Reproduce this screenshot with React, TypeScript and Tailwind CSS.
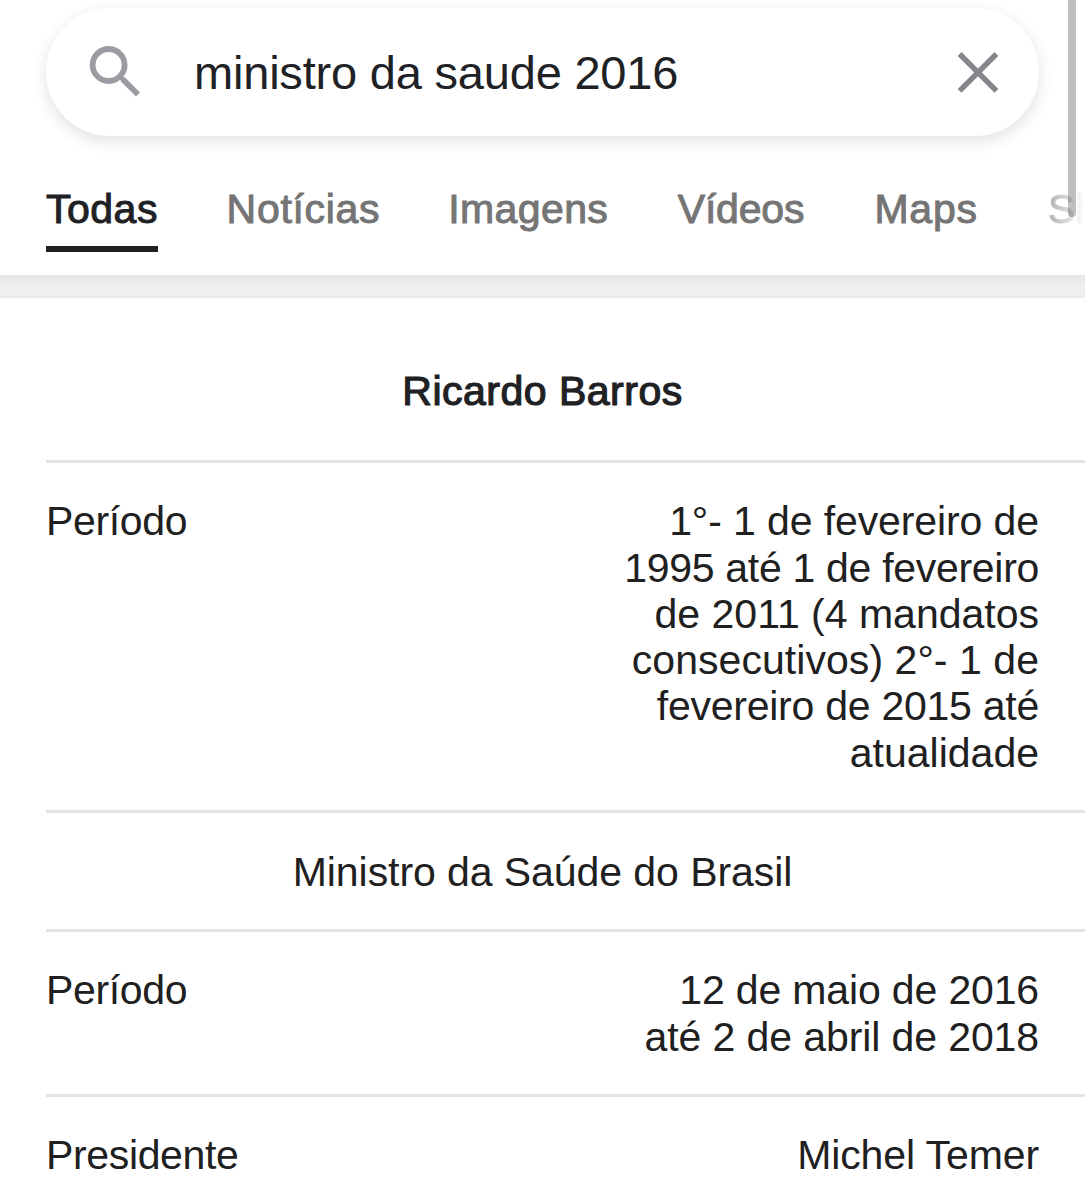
type Tab = { label: string; className: string };

const tabs: Tab[] = [
  { label: "Todas", className: "w-[112px] text-[#202124] tracking-[0.5px]" },
  { label: "Notícias", className: "w-[153px] text-[#757575] tracking-[0.7px]" },
  { label: "Imagens", className: "w-[161px] text-[#757575] tracking-[0.4px]" },
  { label: "Vídeos", className: "w-[128px] text-[#757575] tracking-[-0.2px]" },
  { label: "Maps", className: "w-[105px] text-[#757575] tracking-[0.8px]" },
];

type Line = { text: string; className?: string };

const period: Line[] = [
  { text: "1°- 1 de fevereiro de", className: "tracking-[-0.1px]" },
  { text: "1995 até 1 de fevereiro", className: "tracking-[-0.3px]" },
  { text: "de 2011 (4 mandatos" },
  { text: "consecutivos) 2°- 1 de", className: "tracking-[0.05px]" },
  { text: "fevereiro de 2015 até", className: "tracking-[-0.25px]" },
  { text: "atualidade" },
];

const term: Line[] = [
  { text: "12 de maio de 2016", className: "tracking-[-0.15px]" },
  { text: "até 2 de abril de 2018", className: "tracking-[-0.1px]" },
];

function SearchIcon() {
  return (
    <svg width="52" height="52" viewBox="0 0 52 52" fill="none" stroke="#9a9ca2">
      <circle cx="19.6" cy="19" r="16" strokeWidth="5.8" />
      <path d="M33.5 33L49 48.5" strokeWidth="5.8" />
      <path d="M31 30.5L35 34.5" strokeWidth="4.5" />
    </svg>
  );
}

function ClearIcon() {
  return (
    <svg width="42" height="42" viewBox="0 0 42 42" fill="none" stroke="#85868b" strokeWidth="5.4">
      <path d="M2.6 3L39.4 39.8M39.4 3L2.6 39.8" />
    </svg>
  );
}

function Row({ label, lines }: { label: string; lines: Line[] }) {
  return (
    <div className="ml-[46px] flex justify-between border-b-[3px] border-[#e3e3e3] pt-[35.5px] pb-[34px] pr-[46px]">
      <span className="tracking-[-0.35px]">{label}</span>
      <div className="text-right">
        {lines.map((line) => (
          <div key={line.text} className={line.className}>
            {line.text}
          </div>
        ))}
      </div>
    </div>
  );
}

export default function App() {
  return (
    <div className="relative h-[1200px] w-[1085px] overflow-hidden whitespace-nowrap bg-white font-['Liberation_Sans',Arial,sans-serif] text-[41px] leading-[46.25px] text-[#202020]">
      <header className="h-[275px] pt-2">
        <div className="mx-[46px] flex h-32 items-center rounded-full bg-white pr-[40px] pl-[43px] shadow-[0_5px_16px_rgba(0,0,0,0.12)]">
          <SearchIcon />
          <span className="ml-[53px] flex-1 pt-[2px] text-[47px] leading-[56px] tracking-[-0.2px] text-[#202124]">
            ministro da saude 2016
          </span>
          <ClearIcon />
        </div>
        <nav className="mt-[50px] ml-[46px] flex gap-[68.6px] [-webkit-text-stroke:1px_currentColor]">
          {tabs.map((tab, i) => (
            <div
              key={tab.label}
              className={`h-[66px] shrink-0 ${tab.className} ${i === 0 ? "border-b-[6px] border-[#202124]" : ""}`}
            >
              {tab.label}
            </div>
          ))}
          <div className="shrink-0 bg-linear-to-r from-[#b0b0b0] to-white to-[37px] bg-clip-text text-transparent [-webkit-text-stroke:1px_transparent]">
            Shopping
          </div>
        </nav>
      </header>

      <div className="h-[23px] border-b-[3px] border-[#ebebed] bg-linear-to-b from-[#e5e5e7] to-[#f0f0f3] to-60%" />

      <main>
        <h1 className="ml-[46px] border-b-[3px] border-[#e3e3e3] pt-[70.4px] pr-[46px] pb-[45.35px] text-center tracking-[0.5px] text-[#202124] [-webkit-text-stroke:1.2px_currentColor]">
          Ricardo Barros
        </h1>
        <Row label="Período" lines={period} />
        <div className="ml-[46px] border-b-[3px] border-[#e3e3e3] pt-[35.6px] pr-[46px] pb-[34.15px] text-center tracking-[-0.07px]">
          Ministro da Saúde do Brasil
        </div>
        <Row label="Período" lines={term} />
        <Row label="Presidente" lines={[{ text: "Michel Temer", className: "tracking-[-0.1px]" }]} />
      </main>

      {/* scrollbar thumb */}
      <div className="absolute top-0 right-[9px] h-[217px] w-2 rounded-b-full bg-black/25" />
    </div>
  );
}
